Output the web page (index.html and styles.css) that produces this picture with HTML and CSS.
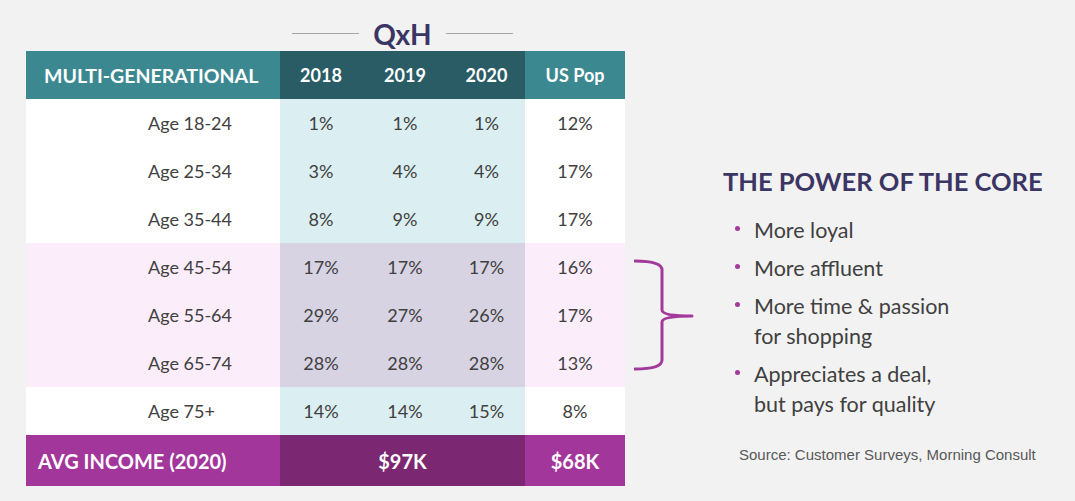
FILE: index.html
```html
<!DOCTYPE html>
<html>
<head>
<meta charset="utf-8">
<link rel="stylesheet" href="styles.css">
</head>
<body>
<div class="slide">
  <div class="left">
    <div class="qxh-row">
      <div class="qxh">
        <span class="rule"></span>
        <span class="qxh-text">QxH</span>
        <span class="rule"></span>
      </div>
    </div>
    <div class="table">
      <div class="c head head-label">MULTI-GENERATIONAL</div>
      <div class="c head head-dark">2018</div>
      <div class="c head head-dark">2019</div>
      <div class="c head head-dark">2020</div>
      <div class="c head">US Pop</div>

      <div class="c label w">Age 18-24</div>
      <div class="c num tl">1%</div><div class="c num tl">1%</div><div class="c num tl">1%</div>
      <div class="c num w">12%</div>

      <div class="c label w">Age 25-34</div>
      <div class="c num tl">3%</div><div class="c num tl">4%</div><div class="c num tl">4%</div>
      <div class="c num w">17%</div>

      <div class="c label w">Age 35-44</div>
      <div class="c num tl">8%</div><div class="c num tl">9%</div><div class="c num tl">9%</div>
      <div class="c num w">17%</div>

      <div class="c label pk">Age 45-54</div>
      <div class="c num lv">17%</div><div class="c num lv">17%</div><div class="c num lv">17%</div>
      <div class="c num pk">16%</div>

      <div class="c label pk">Age 55-64</div>
      <div class="c num lv">29%</div><div class="c num lv">27%</div><div class="c num lv">26%</div>
      <div class="c num pk">17%</div>

      <div class="c label pk">Age 65-74</div>
      <div class="c num lv">28%</div><div class="c num lv">28%</div><div class="c num lv">28%</div>
      <div class="c num pk">13%</div>

      <div class="c label w">Age 75+</div>
      <div class="c num tl">14%</div><div class="c num tl">14%</div><div class="c num tl">15%</div>
      <div class="c num w">8%</div>

      <div class="c foot foot-label">AVG INCOME (2020)</div>
      <div class="c foot foot-dark">$97K</div>
      <div class="c foot">$68K</div>
    </div>
  </div>

  <svg class="brace" width="60" height="112" viewBox="0 0 60 112">
    <path d="M1 2 Q28 2 28 11 L28 51 Q28 57 58 57 Q28 57 28 63 L28 101 Q28 110 1 110" fill="none" stroke="#a3399b" stroke-width="3" stroke-linecap="round" stroke-linejoin="round"/>
  </svg>

  <div class="right">
    <h2 class="core-title">THE POWER OF THE CORE</h2>
    <ul class="points">
      <li><span class="dot"></span><span>More loyal</span></li>
      <li><span class="dot"></span><span>More affluent</span></li>
      <li><span class="dot"></span><span>More time &amp; passion<br>for shopping</span></li>
      <li><span class="dot"></span><span>Appreciates a deal,<br>but pays for quality</span></li>
    </ul>
    <p class="source">Source: Customer Surveys, Morning Consult</p>
  </div>
</div>
</body>
</html>
```

FILE: styles.css
```css
* { box-sizing: border-box; }
html, body {
  margin: 0;
  padding: 0;
  background: #f2f2f2;
}
body {
  font-family: Lato, "Open Sans", sans-serif;
  color: #404040;
  width: 1075px;
  height: 501px;
  overflow: hidden;
}
.slide {
  display: flex;
  align-items: flex-start;
  padding-left: 26px;
}
.left {
  width: 599px;
  flex: none;
}
.qxh-row {
  height: 51px;
  padding-left: 254px;
  padding-top: 17px;
}
.qxh {
  width: 245px;
  display: flex;
  align-items: center;
  justify-content: center;
  gap: 14px;
  height: 34px;
}
.rule {
  display: block;
  width: 67px;
  height: 1px;
  background: #a6a6a6;
  margin-top: -2px;
}
.qxh-text {
  font-weight: 700;
  font-size: 28px;
  line-height: 34px;
  color: #3b3564;
}
.table {
  display: grid;
  grid-template-columns: 254px 82px 86px 77px 100px;
  grid-template-rows: repeat(8, 48px) 51px;
}
.c {
  display: flex;
  align-items: center;
  justify-content: center;
  font-size: 18px;
}
.head {
  background: #3c8891;
  color: #fff;
  font-weight: 700;
  font-size: 18px;
}
.head-label {
  justify-content: flex-start;
  padding-left: 18px;
  font-size: 19.5px;
}
.head-dark { background: #2a5c65; }
.label {
  justify-content: flex-start;
  padding-left: 122px;
}
.w { background: #ffffff; }
.tl { background: #dbeef1; }
.pk { background: #fcedfb; }
.lv { background: #d7d3e3; }
.foot {
  background: #a2369a;
  color: #fff;
  font-weight: 700;
  font-size: 20px;
}
.foot-label {
  justify-content: flex-start;
  padding-left: 12px;
}
.foot-dark {
  grid-column: span 3;
  background: #7b2771;
}
.brace {
  flex: none;
  display: block;
  margin-left: 9px;
  margin-top: 259px;
}
.right {
  margin-left: 29px;
  margin-top: 166px;
}
.core-title {
  margin: 0;
  font-size: 25.5px;
  line-height: 31px;
  font-weight: 700;
  color: #3b3564;
}
.points {
  list-style: none;
  margin: 18px 0 0 0;
  padding: 0;
}
.points li {
  display: flex;
  align-items: flex-start;
  font-size: 21.5px;
  line-height: 30px;
  margin-bottom: 8px;
  color: #404040;
}
.points li:last-child { margin-bottom: 0; }
.dot {
  flex: none;
  width: 5px;
  height: 5px;
  border-radius: 50%;
  background: #a3399b;
  margin: 11px 14px 0 12px;
}
.source {
  margin: 28px 0 0 16px;
  font-family: "Liberation Sans", Arial, sans-serif;
  font-size: 15px;
  line-height: 16px;
  color: #595959;
}
```
